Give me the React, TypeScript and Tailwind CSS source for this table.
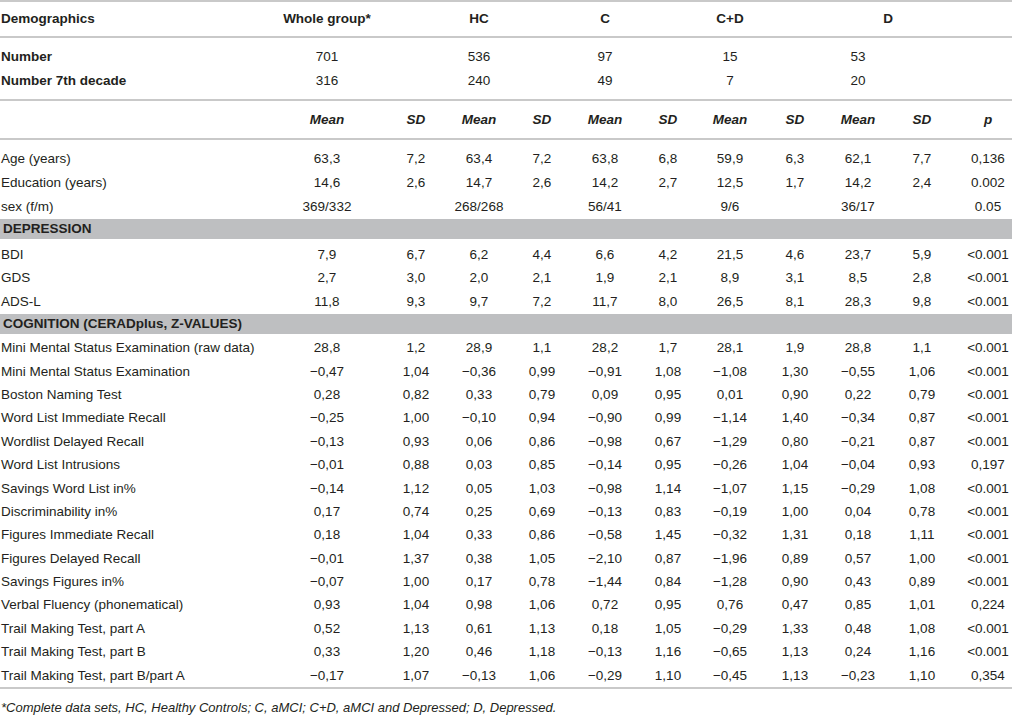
const cols =
  "grid grid-cols-[270px_114px_64px_62px_64px_62px_64px_60px_70px_56px_72px_60px] items-center";

type RowData = [string, ...string[]];

const demoRows: RowData[] = [
  ["Age (years)", "63,3", "7,2", "63,4", "7,2", "63,8", "6,8", "59,9", "6,3", "62,1", "7,7", "0,136"],
  ["Education (years)", "14,6", "2,6", "14,7", "2,6", "14,2", "2,7", "12,5", "1,7", "14,2", "2,4", "0.002"],
  ["sex (f/m)", "369/332", "", "268/268", "", "56/41", "", "9/6", "", "36/17", "", "0.05"],
];

const depRows: RowData[] = [
  ["BDI", "7,9", "6,7", "6,2", "4,4", "6,6", "4,2", "21,5", "4,6", "23,7", "5,9", "<0.001"],
  ["GDS", "2,7", "3,0", "2,0", "2,1", "1,9", "2,1", "8,9", "3,1", "8,5", "2,8", "<0.001"],
  ["ADS-L", "11,8", "9,3", "9,7", "7,2", "11,7", "8,0", "26,5", "8,1", "28,3", "9,8", "<0.001"],
];

const cogRows: RowData[] = [
  ["Mini Mental Status Examination (raw data)", "28,8", "1,2", "28,9", "1,1", "28,2", "1,7", "28,1", "1,9", "28,8", "1,1", "<0.001"],
  ["Mini Mental Status Examination", "−0,47", "1,04", "−0,36", "0,99", "−0,91", "1,08", "−1,08", "1,30", "−0,55", "1,06", "<0.001"],
  ["Boston Naming Test", "0,28", "0,82", "0,33", "0,79", "0,09", "0,95", "0,01", "0,90", "0,22", "0,79", "<0.001"],
  ["Word List Immediate Recall", "−0,25", "1,00", "−0,10", "0,94", "−0,90", "0,99", "−1,14", "1,40", "−0,34", "0,87", "<0.001"],
  ["Wordlist Delayed Recall", "−0,13", "0,93", "0,06", "0,86", "−0,98", "0,67", "−1,29", "0,80", "−0,21", "0,87", "<0.001"],
  ["Word List Intrusions", "−0,01", "0,88", "0,03", "0,85", "−0,14", "0,95", "−0,26", "1,04", "−0,04", "0,93", "0,197"],
  ["Savings Word List in%", "−0,14", "1,12", "0,05", "1,03", "−0,98", "1,14", "−1,07", "1,15", "−0,29", "1,08", "<0.001"],
  ["Discriminability in%", "0,17", "0,74", "0,25", "0,69", "−0,13", "0,83", "−0,19", "1,00", "0,04", "0,78", "<0.001"],
  ["Figures Immediate Recall", "0,18", "1,04", "0,33", "0,86", "−0,58", "1,45", "−0,32", "1,31", "0,18", "1,11", "<0.001"],
  ["Figures Delayed Recall", "−0,01", "1,37", "0,38", "1,05", "−2,10", "0,87", "−1,96", "0,89", "0,57", "1,00", "<0.001"],
  ["Savings Figures in%", "−0,07", "1,00", "0,17", "0,78", "−1,44", "0,84", "−1,28", "0,90", "0,43", "0,89", "<0.001"],
  ["Verbal Fluency (phonematical)", "0,93", "1,04", "0,98", "1,06", "0,72", "0,95", "0,76", "0,47", "0,85", "1,01", "0,224"],
  ["Trail Making Test, part A", "0,52", "1,13", "0,61", "1,13", "0,18", "1,05", "−0,29", "1,33", "0,48", "1,08", "<0.001"],
  ["Trail Making Test, part B", "0,33", "1,20", "0,46", "1,18", "−0,13", "1,16", "−0,65", "1,13", "0,24", "1,16", "<0.001"],
  ["Trail Making Test, part B/part A", "−0,17", "1,07", "−0,13", "1,06", "−0,29", "1,10", "−0,45", "1,13", "−0,23", "1,10", "0,354"],
];

function Cell({ children, className = "" }: { children?: React.ReactNode; className?: string }) {
  return <div className={`flex justify-center whitespace-nowrap ${className}`}>{children}</div>;
}

function Line() {
  return <div className="h-[2px] w-full bg-[#c9c9c9]" />;
}

function DataRow({ row, h }: { row: RowData; h: string }) {
  const [label, ...vals] = row;
  return (
    <div className={`${cols} ${h}`}>
      <div className="pl-[1px] whitespace-nowrap">{label}</div>
      {vals.map((v, i) => (
        <Cell key={i}>{v}</Cell>
      ))}
    </div>
  );
}

function Band({ title }: { title: string }) {
  return (
    <div className="h-[20px] bg-[#bebfc1] flex items-center pl-[3px] font-bold">{title}</div>
  );
}

export default function App() {
  const subHeads = ["Mean", "SD", "Mean", "SD", "Mean", "SD", "Mean", "SD", "Mean", "SD", "p"];
  return (
    <div
      className="w-[1012px] h-[717px] overflow-hidden bg-white text-[#231f20] text-[13.5px] leading-[16px]"
      style={{ fontFamily: '"Liberation Sans", Arial, sans-serif' }}
    >
      <Line />
      <div className={`${cols} h-[34px] font-bold`}>
        <div className="pl-[1px]">Demographics</div>
        <Cell>Whole group*</Cell>
        <Cell />
        <Cell>HC</Cell>
        <Cell />
        <Cell>C</Cell>
        <Cell />
        <Cell>C+D</Cell>
        <Cell />
        <Cell className="col-span-2 pr-[12px]">D</Cell>
      </div>
      <Line />
      <div className="pt-[7px] pb-[6px]">
        {[
          ["Number", "701", "536", "97", "15", "53"],
          ["Number 7th decade", "316", "240", "49", "7", "20"],
        ].map((r) => (
          <div key={r[0]} className={`${cols} h-[24px]`}>
            <div className="pl-[1px] font-bold">{r[0]}</div>
            <Cell>{r[1]}</Cell>
            <Cell />
            <Cell>{r[2]}</Cell>
            <Cell />
            <Cell>{r[3]}</Cell>
            <Cell />
            <Cell>{r[4]}</Cell>
            <Cell />
            <Cell>{r[5]}</Cell>
          </div>
        ))}
      </div>
      <Line />
      <div className={`${cols} h-[37px] font-bold italic`}>
        <div />
        {subHeads.map((s, i) => (
          <Cell key={i}>{s}</Cell>
        ))}
      </div>
      <Line />
      <div className="pt-[7px]">
        {demoRows.map((r) => (
          <DataRow key={r[0]} row={r} h="h-[24px]" />
        ))}
      </div>
      <Band title="DEPRESSION" />
      <div className="pt-[4px]">
        {depRows.map((r) => (
          <DataRow key={r[0]} row={r} h="h-[23.5px]" />
        ))}
      </div>
      <Band title="COGNITION (CERADplus, Z-VALUES)" />
      <div className="pt-[3px]">
        {cogRows.map((r, i) => (
          <DataRow key={i} row={r} h="h-[23.4px]" />
        ))}
      </div>
      <Line />
      <p className="pl-[1px] pt-[11px] italic text-[13px]">
        *Complete data sets, HC, Healthy Controls; C, aMCI; C+D, aMCI and Depressed; D, Depressed.
      </p>
    </div>
  );
}
